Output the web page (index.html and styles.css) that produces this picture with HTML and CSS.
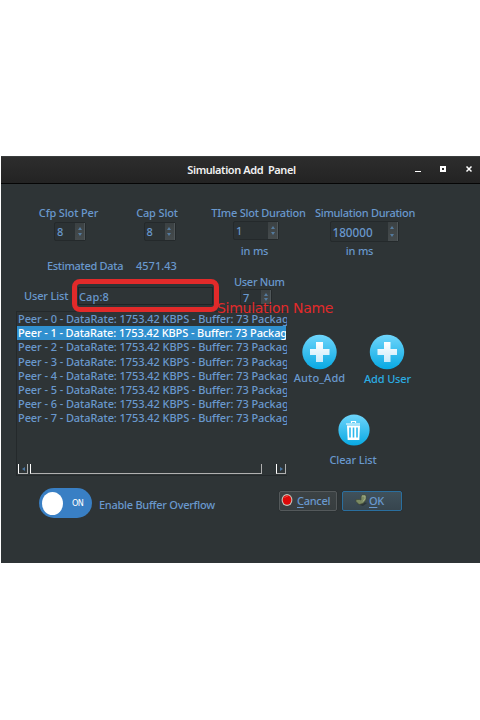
FILE: index.html
```
<!DOCTYPE html>
<html lang="en">
<head>
<meta charset="utf-8">
<title>Simulation Add Panel</title>
<link rel="stylesheet" href="styles.css">
</head>
<body>
<main class="window">
  <header class="titlebar">
    <h1>Simulation Add&nbsp; Panel</h1>
    <div class="controls">
      <svg width="60" height="12" viewBox="0 0 60 12" shape-rendering="crispEdges"><path d="M1 7h6v1H1z" fill="#fff"/><path d="M27 3h4v4h-4z" fill="none" stroke="#fff" stroke-width="2"/><path d="M52.500 2.500l5 5M57.500 2.500l-5 5" stroke="#fff" stroke-width="1.500" shape-rendering="auto"/></svg>
    </div>
  </header>
  <section class="fields">
    <div class="field cfp"><label>Cfp Slot Per</label><div class="spin"><span>8</span><i class="steps"></i></div></div>
    <div class="field cap"><label>Cap Slot</label><div class="spin"><span>8</span><i class="steps"></i></div></div>
    <div class="field slot"><label>TIme Slot Duration</label><div class="spin"><span>1</span><i class="steps"></i></div><small>in ms</small></div>
    <div class="field sim"><label>Simulation Duration</label><div class="spin"><span>180000</span><i class="steps"></i></div><small>in ms</small></div>
  </section>
  <div class="estimate"><span class="est-label">Estimated Data</span><span class="est-value">4571.43</span></div>
  <section class="user-row">
    <label class="ul-label">User List</label>
    <div class="marker"><div class="entry">Cap:8</div></div>
    <div class="usernum"><label>User Num</label><div class="spin"><span>7</span><i class="steps"></i></div></div>
    <div class="note">Simulation Name</div>
  </section>
  <section class="middle">
    <div class="list">
      <ul>
        <li>Peer - 0 - DataRate: 1753.42 KBPS - Buffer: 73 Packag</li>
        <li class="selected">Peer - 1 - DataRate: 1753.42 KBPS - Buffer: 73 Packag</li>
        <li>Peer - 2 - DataRate: 1753.42 KBPS - Buffer: 73 Packag</li>
        <li>Peer - 3 - DataRate: 1753.42 KBPS - Buffer: 73 Packag</li>
        <li>Peer - 4 - DataRate: 1753.42 KBPS - Buffer: 73 Packag</li>
        <li>Peer - 5 - DataRate: 1753.42 KBPS - Buffer: 73 Packag</li>
        <li>Peer - 6 - DataRate: 1753.42 KBPS - Buffer: 73 Packag</li>
        <li>Peer - 7 - DataRate: 1753.42 KBPS - Buffer: 73 Packag</li>
      </ul>
      <div class="scrollbar"><i class="arrow left"></i><i class="thumb"></i><i class="arrow right"></i></div>
    </div>
    <div class="actions">
      <div class="action auto">
        <svg width="36" height="36" viewBox="0 0 36 36"><defs><linearGradient id="sky" x1="0" y1="0" x2="0" y2="1"><stop offset="0" stop-color="#6fd5fb"/><stop offset="1" stop-color="#08a9e3"/></linearGradient><linearGradient id="cross" x1="0" y1="0" x2="0" y2="1"><stop offset="0" stop-color="#fff"/><stop offset="1" stop-color="#c9eafa"/></linearGradient></defs><circle cx="17.500" cy="18" r="17.200" fill="url(#sky)"/><path d="M14 8h7v7h6.500v6H21v7h-7v-7H8v-6h6z" fill="url(#cross)"/></svg>
        <span>Auto_Add</span>
      </div>
      <div class="action add">
        <svg width="36" height="36" viewBox="0 0 36 36"><circle cx="18" cy="18" r="17.200" fill="url(#sky)"/><path d="M15 8h6.500v7H28v6h-6.500v7H15v-7H8.500v-6H15z" fill="url(#cross)"/></svg>
        <span>Add User</span>
      </div>
      <div class="action clear">
        <svg width="32" height="32" viewBox="0 0 32 32"><circle cx="16" cy="16" r="15.600" fill="url(#sky)"/><path d="M8 10h14M13.500 9V7.500h4V9" stroke="#fff" stroke-width="1.200" fill="none"/><path d="M9 11.500h13l-.7 14.500H9.700z" fill="#fff"/><path d="M12 13.500v10M15.500 13.500v10M19 13.500v10" stroke="#2bb8ed" stroke-width="1.600"/></svg>
        <span>Clear List</span>
      </div>
    </div>
  </section>
  <footer class="bottom">
    <div class="toggle"><i class="knob"></i><span>ON</span></div>
    <span class="overflow">Enable Buffer Overflow</span>
    <button class="btn cancel"><svg width="12" height="12" viewBox="0 0 12 12"><ellipse cx="6" cy="6" rx="5.400" ry="5.900" fill="#c5c5b9"/><ellipse cx="6" cy="6" rx="4.300" ry="4.800" fill="#dc0808"/><path d="M3.500 4q1-2 3.500-2" stroke="#f04b40" fill="none"/></svg><span><u>C</u>ancel</span></button>
    <button class="btn ok"><svg width="12" height="12" viewBox="0 0 12 12"><path d="M2 10l6 2 4-3-4-1z" fill="#2c3539"/><path d="M1 5.500h3.500L6 6V2l1.500-1H11v5L8 9.500l-4 1L1 7.500z" fill="#7b8a63" stroke="#424b38" stroke-width=".7"/><path d="M7 2h3v2.500L8 7.500" fill="none" stroke="#a4ae8c"/></svg><span><u>O</u>K</span></button>
  </footer>
</main>
</body>
</html>
```
FILE: styles.css
```
* { box-sizing: border-box; }
body { margin: 0; padding-top: 156px; height: 720px; overflow: hidden; background: #fff; font: 500 11px/16px "Noto Sans", sans-serif; letter-spacing: -.15px; color: #6998cd; }
label, span, small, li, .entry { white-space: nowrap; }
.window { width: 479px; height: 407px; margin-left: 1px; background: #2e3436; overflow: hidden; }
.titlebar { position: relative; height: 28px; background: linear-gradient(#2d2d2d, #232323); border-top: 1px solid #3a3d3d; border-bottom: 1px solid #050505; display: flex; justify-content: center; align-items: center; }
h1 { margin: 0 0 0 2px; font-size: 11px; line-height: 16px; color: #f1f1f1; font-weight: 600; letter-spacing: -.42px; }
.controls { position: absolute; right: 6px; top: 7px; height: 12px; }
.controls svg { display: block; }
.fields { display: flex; height: 74px; padding-top: 21px; }
.field { display: flex; flex-direction: column; align-items: center; }
.field label { height: 17px; }
.cfp { width: 59px; margin-left: 38px; }
.cap { width: 42px; margin-left: 38px; }
.slot { width: 95px; margin-left: 33px; letter-spacing: -.25px; }
.sim { width: 100px; margin-left: 9px; letter-spacing: -.3px; }
.spin { width: 32px; height: 19px; display: flex; justify-content: space-between; align-items: stretch; border: 1px solid #24292b; border-radius: 2px; background: #2c3234; line-height: 18px; padding-left: 2px; letter-spacing: 0; }
.cfp .spin { margin-left: 3px; }
.cap .spin { margin-left: 5px; }
.slot .spin { width: 46px; margin-right: 5px; }
.sim .spin { width: 69px; height: 21px; margin-right: 2px; line-height: 21px; font-size: 11.700px; }
.steps { width: 10px; background: linear-gradient(#3b4143, #454b4d); border-right: 1px solid #50575a; display: flex; flex-direction: column; align-items: center; justify-content: space-evenly; }
.steps::before, .steps::after { content: ""; border: 2px solid transparent; width: 0; height: 0; border-top: 0; border-bottom: 3px solid #557b9f; }
.steps::after { border-bottom: 0; border-top: 3px solid #557b9f; }
small { font-size: 11px; margin-top: 3px; letter-spacing: -.2px; }
.slot small { margin-right: 8px; }
.sim small { margin-top: 1px; margin-right: 11px; }
.estimate { height: 16px; display: flex; padding-left: 46px; }
.est-label { width: 89px; letter-spacing: -.3px; }
.est-value { letter-spacing: 0; }
.user-row { position: relative; height: 37px; display: flex; }
.ul-label { width: 71px; padding: 14px 0 0 23px; }
.marker { width: 147px; height: 33px; margin-top: 5px; border: 5px solid #e22a2a; border-radius: 8px; padding: 3px 1px; }
.entry { height: 18px; border: 1px solid #1f2426; line-height: 17px; letter-spacing: .1px; }
.usernum { margin-left: 15px; display: flex; flex-direction: column; letter-spacing: -.3px; }
.usernum label { line-height: 16px; height: 15px; }
.usernum .spin { margin-left: 6px; height: 16px; line-height: 15px; }
.note { position: absolute; left: 216px; top: 25px; font: 14px/18px "DejaVu Sans", sans-serif; letter-spacing: -.28px; color: #e22a2a; white-space: nowrap; z-index: 2; }
.middle { display: flex; height: 165px; }
.list { width: 271px; margin-left: 15px; border: 1px solid #24292b; border-right: 0; display: flex; flex-direction: column; justify-content: space-between; overflow: hidden; }
ul { margin: 0; padding: 0; list-style: none; }
li { height: 14.2px; line-height: 14.2px; padding-left: 1px; overflow: hidden; letter-spacing: -.08px; }
.selected { background: #3090cf; color: #fff; letter-spacing: -.11px; margin-right: 1px; }
.scrollbar { display: flex; height: 10px; margin: 0 0 1px 1px; }
.arrow, .thumb { border: 1px solid #b0b0b0; border-left-color: #fff; border-top: 0; }
.arrow { width: 10px; flex: none; display: flex; align-items: center; justify-content: center; }
.arrow::before { content: ""; border: 2px solid transparent; border-left: 3px solid #4a77a4; border-right: 0; }
.left::before { transform: scaleX(-1); }
.thumb { width: 232px; flex: none; margin: 0 14px 0 2px; }
.actions { display: grid; grid-template-columns: 67px 67px; grid-template-rows: 78px 60px; padding-top: 23px; margin-left: -1px; }
.action { display: flex; flex-direction: column; align-items: center; }
.auto span { letter-spacing: .1px; }
.action svg { display: block; }
.add span { color: #2bace2; margin-top: 1px; margin-left: 2px; }
.clear { grid-column: 1 / 3; padding-top: 2px; }
.clear svg { margin-left: 1px; }
.clear span { margin-top: 6px; }
.bottom { display: flex; height: 87px; padding: 12px 0 0 38px; }
.toggle { width: 53px; height: 30px; border-radius: 15px; background: #397fc4; display: flex; align-items: center; padding-left: 3px; }
.knob { width: 21px; height: 23px; border-radius: 50%; background: #fff; }
.toggle span { margin-left: 9px; font: 9px/12px "DejaVu Sans Condensed", "DejaVu Sans", sans-serif; color: #fff; letter-spacing: -.5px; }
.overflow { width: 187px; padding: 9px 0 0 7px; letter-spacing: -.27px; }
.btn { width: 58px; height: 20px; margin: 3px 5px 0 0; padding: 0; border: 1px solid #54595b; border-radius: 2px; background: linear-gradient(#3c4244, #373d3f); color: #6998cd; font: 500 11px/18px "Noto Sans", sans-serif; letter-spacing: -.3px; display: flex; align-items: center; gap: 4px; padding-left: 1px; box-shadow: 0 0 1px #1d2021; }
.ok { width: 60px; border-color: #2a6f9f; background: linear-gradient(#40515b, #37454e); gap: 2px; padding-left: 12px; }
.btn svg { position: relative; top: -1px; }
u { text-underline-offset: 2px; }
```
